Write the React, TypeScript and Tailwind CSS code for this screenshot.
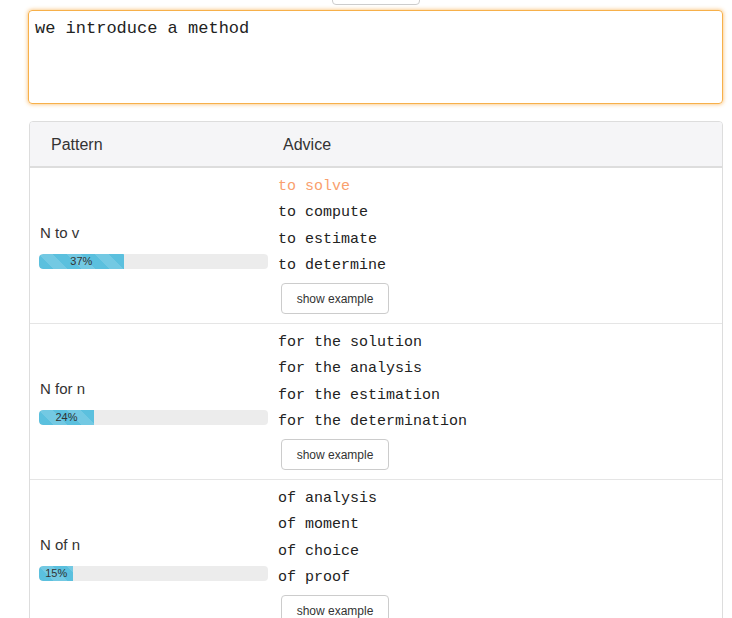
const rows = [
  {
    pattern: "N to v",
    pct: 37,
    advice: ["to solve", "to compute", "to estimate", "to determine"],
    hit: 0,
  },
  {
    pattern: "N for n",
    pct: 24,
    advice: ["for the solution", "for the analysis", "for the estimation", "for the determination"],
    hit: -1,
  },
  {
    pattern: "N of n",
    pct: 15,
    advice: ["of analysis", "of moment", "of choice", "of proof"],
    hit: -1,
  },
];

function Progress({ pct }: { pct: number }) {
  return (
    <div className="h-[15px] w-[229px] rounded-[4px] bg-[#ececec] overflow-hidden">
      <div
        className="h-full flex items-center justify-center rounded-l-[4px] bg-[#5bc0de] bg-[linear-gradient(45deg,rgba(255,255,255,.15)_25%,transparent_25%,transparent_50%,rgba(255,255,255,.15)_50%,rgba(255,255,255,.15)_75%,transparent_75%,transparent)] bg-[length:28px_28px] text-[11px] leading-none text-[#333]"
        style={{ width: `${pct}%` }}
      >
        {pct}%
      </div>
    </div>
  );
}

export default function App() {
  return (
    <div className="w-[732px] h-[618px] overflow-hidden bg-white font-['Liberation_Sans',Arial,sans-serif] text-[#333]">
      <div className="ml-[28px] w-[695px]">
        <div className="h-[5px] overflow-hidden flex items-end justify-center">
          <button className="shrink-0 h-[30px] w-[88px] rounded-[4px] border border-[#ccc] bg-white"></button>
        </div>
        <textarea
          defaultValue="we introduce a method"
          className="mt-[5px] block w-full h-[94px] resize-none rounded-[4px] border border-[#f7b04a] shadow-[0_0_4px_rgba(247,166,60,0.8)] outline-none px-[6px] pt-[8px] pb-[6px] font-['Liberation_Mono','Courier_New',monospace] text-[17px] leading-[20px] text-[#222]"
        />
        <div className="mt-[17px] ml-[1px] w-[694px] rounded-[4px] border border-[#ddd] overflow-hidden">
          <div className="flex h-[46px] items-center bg-[#f5f5f7] border-b-2 border-[#ddd] text-[16px]">
            <div className="w-[248px] pl-[21px] pt-[1px]">Pattern</div>
            <div className="pl-[5px] pt-[1px]">Advice</div>
          </div>
          {rows.map((r, i) => (
            <div key={i} className="flex h-[156px] border-b border-[#e5e5e5]">
              <div className="w-[248px] pl-[9px] pr-[10px] flex flex-col justify-center">
                <div className="text-[15px] leading-[20px] pl-[1px]">{r.pattern}</div>
                <div className="mt-[11px]">
                  <Progress pct={r.pct} />
                </div>
              </div>
              <div className="pt-[6px] flex flex-col items-start">
                {r.advice.map((a, j) => (
                  <div
                    key={j}
                    className={
                      "font-['Liberation_Mono','Courier_New',monospace] text-[15px] leading-[26.25px] " +
                      (j === r.hit ? "text-[#f9a06e]" : "text-[#222]")
                    }
                  >
                    {a}
                  </div>
                ))}
                <button className="mt-[4px] ml-[3px] h-[31px] w-[108px] rounded-[4px] border border-[#ccc] bg-white text-[12px] text-[#333]">
                  show example
                </button>
              </div>
            </div>
          ))}
        </div>
      </div>
    </div>
  );
}
